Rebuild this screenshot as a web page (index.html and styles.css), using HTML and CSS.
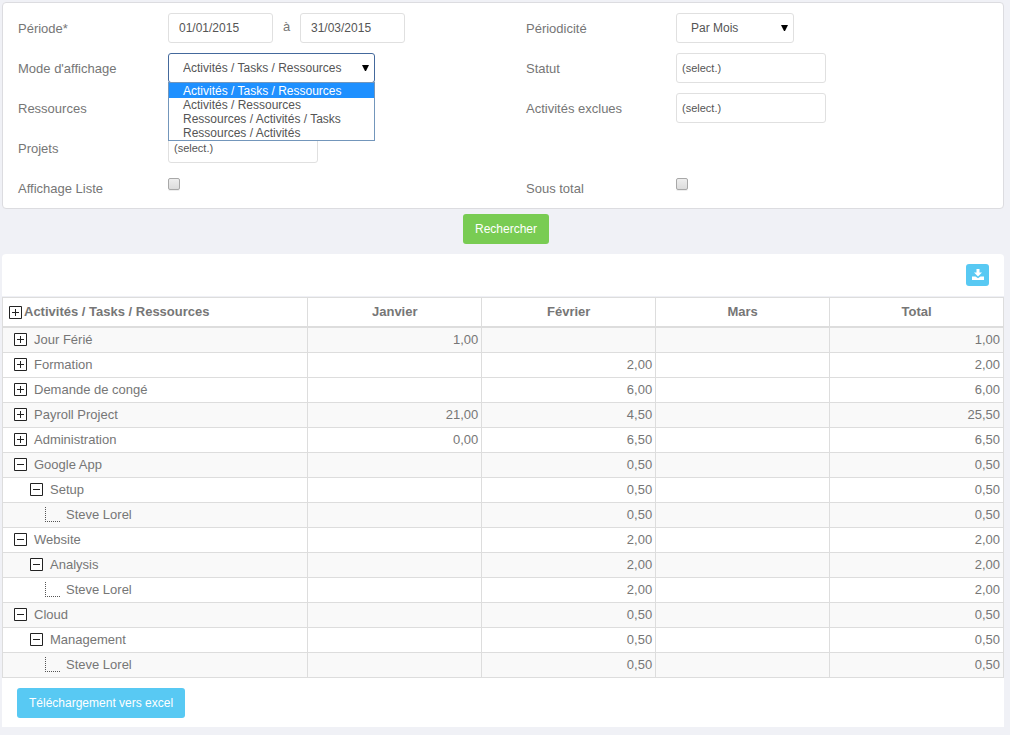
FILE: index.html
```html
<!DOCTYPE html>
<html lang="fr">
<head>
<meta charset="utf-8">
<title>Activités / Tasks / Ressources</title>
<link rel="stylesheet" href="styles.css">
</head>
<body>
<svg class="sprite" aria-hidden="true">
  <symbol id="plus" viewBox="0 0 13 13"><path d="M.5.5h12v12H.5z" fill="#fff" stroke="#222"/><path d="M3 6.500h7M6.500 3v7" stroke="#222"/></symbol>
  <symbol id="minus" viewBox="0 0 13 13"><path d="M.5.5h12v12H.5z" fill="#fff" stroke="#222"/><path d="M3 6.500h7" stroke="#222"/></symbol>
  <symbol id="branch" viewBox="0 0 16 16"><path d="M.5 0v15M0 14.500h16" fill="none" stroke="#555" stroke-dasharray="1 1"/></symbol>
  <symbol id="arrow" viewBox="0 0 7 6"><path d="M0 0h7L4 6H3z" fill="#000"/></symbol>
</svg>
<form class="page">
  <section class="filters">
    <div class="field">
      <label class="label" for="from">Période*</label>
      <div class="control">
        <input class="box date" id="from" type="text" value="01/01/2015">
        <label class="between" for="to">à</label>
        <input class="box date" id="to" type="text" value="31/03/2015">
      </div>
    </div>
    <div class="field">
      <label class="label" for="period">Périodicité</label>
      <div class="control">
        <div class="select-wrap">
          <select class="box select narrow" id="period"><option>Par Mois</option></select>
          <svg class="arrow"><use href="#arrow"/></svg>
        </div>
      </div>
    </div>
    <div class="field">
      <label class="label" for="mode">Mode d'affichage</label>
      <div class="control">
        <div class="select-wrap">
          <select class="box select wide open" id="mode"><option>Activités / Tasks / Ressources</option></select>
          <svg class="arrow"><use href="#arrow"/></svg>
          <ul class="options" role="listbox" aria-label="Mode d'affichage">
            <li class="option selected" role="option" aria-selected="true">Activités / Tasks / Ressources</li>
            <li class="option" role="option">Activités / Ressources</li>
            <li class="option" role="option">Ressources / Activités / Tasks</li>
            <li class="option" role="option">Ressources / Activités</li>
          </ul>
        </div>
      </div>
    </div>
    <div class="field">
      <label class="label" for="status">Statut</label>
      <div class="control"><input class="box picker" id="status" type="text" value="(select.)"></div>
    </div>
    <div class="field">
      <label class="label" for="resources">Ressources</label>
      <div class="control"><input class="box picker" id="resources" type="text"></div>
    </div>
    <div class="field">
      <label class="label" for="excluded">Activités exclues</label>
      <div class="control"><input class="box picker" id="excluded" type="text" value="(select.)"></div>
    </div>
    <div class="field first-column">
      <label class="label" for="projects">Projets</label>
      <div class="control"><input class="box picker" id="projects" type="text" value="(select.)"></div>
    </div>
    <div class="field short first-column">
      <label class="label" for="list">Affichage Liste</label>
      <div class="control"><input class="check" id="list" type="checkbox"></div>
    </div>
    <div class="field short">
      <label class="label" for="subtotal">Sous total</label>
      <div class="control"><input class="check" id="subtotal" type="checkbox"></div>
    </div>
  </section>

  <div class="search"><button class="button green" type="button">Rechercher</button></div>

  <section class="report">
    <div class="toolbar">
      <button class="download" type="button" aria-label="Télécharger">
        <svg class="download-icon" viewBox="0 0 12 11"><path d="M4.500 0h3v3.500H10L6 7.500 2 3.500h2.500z" fill="#fff"/><path d="M0 7.500h3.500L6 9.200l2.500-1.700H12V11H0z" fill="#fff"/></svg>
      </button>
    </div>
    <table class="grid">
      <colgroup><col class="name-col"><col><col><col><col></colgroup>
      <thead>
        <tr>
          <th class="name"><div class="node root"><button class="toggle" type="button" aria-label="Tout déplier"><svg class="icon"><use href="#plus"/></svg></button>Activités / Tasks / Ressources</div></th>
          <th>Janvier</th><th>Février</th><th>Mars</th><th>Total</th>
        </tr>
      </thead>
      <tbody>
        <tr class="shade"><td class="name"><div class="node"><button class="toggle" type="button" aria-label="Déplier"><svg class="icon"><use href="#plus"/></svg></button>Jour Férié</div></td><td>1,00</td><td></td><td></td><td>1,00</td></tr>
        <tr><td class="name"><div class="node"><button class="toggle" type="button" aria-label="Déplier"><svg class="icon"><use href="#plus"/></svg></button>Formation</div></td><td></td><td>2,00</td><td></td><td>2,00</td></tr>
        <tr><td class="name"><div class="node"><button class="toggle" type="button" aria-label="Déplier"><svg class="icon"><use href="#plus"/></svg></button>Demande de congé</div></td><td></td><td>6,00</td><td></td><td>6,00</td></tr>
        <tr class="shade"><td class="name"><div class="node"><button class="toggle" type="button" aria-label="Déplier"><svg class="icon"><use href="#plus"/></svg></button>Payroll Project</div></td><td>21,00</td><td>4,50</td><td></td><td>25,50</td></tr>
        <tr><td class="name"><div class="node"><button class="toggle" type="button" aria-label="Déplier"><svg class="icon"><use href="#plus"/></svg></button>Administration</div></td><td>0,00</td><td>6,50</td><td></td><td>6,50</td></tr>
        <tr class="shade"><td class="name"><div class="node"><button class="toggle" type="button" aria-label="Replier"><svg class="icon"><use href="#minus"/></svg></button>Google App</div></td><td></td><td>0,50</td><td></td><td>0,50</td></tr>
        <tr><td class="name"><div class="node task"><button class="toggle" type="button" aria-label="Replier"><svg class="icon"><use href="#minus"/></svg></button>Setup</div></td><td></td><td>0,50</td><td></td><td>0,50</td></tr>
        <tr class="shade"><td class="name"><div class="node person"><svg class="branch"><use href="#branch"/></svg>Steve Lorel</div></td><td></td><td>0,50</td><td></td><td>0,50</td></tr>
        <tr><td class="name"><div class="node"><button class="toggle" type="button" aria-label="Replier"><svg class="icon"><use href="#minus"/></svg></button>Website</div></td><td></td><td>2,00</td><td></td><td>2,00</td></tr>
        <tr class="shade"><td class="name"><div class="node task"><button class="toggle" type="button" aria-label="Replier"><svg class="icon"><use href="#minus"/></svg></button>Analysis</div></td><td></td><td>2,00</td><td></td><td>2,00</td></tr>
        <tr><td class="name"><div class="node person"><svg class="branch"><use href="#branch"/></svg>Steve Lorel</div></td><td></td><td>2,00</td><td></td><td>2,00</td></tr>
        <tr class="shade"><td class="name"><div class="node"><button class="toggle" type="button" aria-label="Replier"><svg class="icon"><use href="#minus"/></svg></button>Cloud</div></td><td></td><td>0,50</td><td></td><td>0,50</td></tr>
        <tr><td class="name"><div class="node task"><button class="toggle" type="button" aria-label="Replier"><svg class="icon"><use href="#minus"/></svg></button>Management</div></td><td></td><td>0,50</td><td></td><td>0,50</td></tr>
        <tr class="shade"><td class="name"><div class="node person"><svg class="branch"><use href="#branch"/></svg>Steve Lorel</div></td><td></td><td>0,50</td><td></td><td>0,50</td></tr>
      </tbody>
    </table>
    <div class="footer"><button class="button blue" type="button">Téléchargement vers excel</button></div>
  </section>
</form>
</body>
</html>
```
FILE: styles.css
```css
* { box-sizing: border-box; }

body {
  margin: 0;
  padding: 2px 6px 8px 2px;
  background: #f0f1f6;
  color: #767676;
  font: 13px/20px "Liberation Sans", Arial, sans-serif;
}

button, input, select { font-family: inherit; margin: 0; }

.sprite { display: none; }

/* Filters */
.filters {
  display: grid;
  grid-template-columns: 1fr 1fr;
  gap: 10px 46px;
  padding: 10px 15px 9px;
  background: #fff;
  border: 1px solid #dcdce0;
  border-radius: 4px;
}
.field { display: flex; min-height: 30px; }
.short { min-height: 26px; }
.first-column { grid-column-start: 1; }
.label { width: 150px; padding-top: 6px; }
.control { display: flex; align-items: flex-start; }
.between { width: 27px; padding-top: 4px; text-align: center; }

.box {
  display: block;
  height: 30px;
  padding: 0 10px;
  background: #fff;
  border: 1px solid #e0e0e0;
  border-radius: 3px;
  color: #555;
  font-size: 12px;
}
.date { width: 105px; }
.picker { width: 150px; padding: 0 5px; font-size: 11px; }
.select-wrap { position: relative; }
.select { appearance: none; padding: 0 14px; }
.narrow { width: 118px; }
.wide { width: 207px; }
.open { border-color: #44699c; }
.arrow {
  position: absolute;
  top: 12px;
  right: 6px;
  width: 7px;
  height: 6px;
  pointer-events: none;
}
.options {
  position: absolute;
  z-index: 1;
  top: 29px;
  left: 0;
  width: 100%;
  margin: 0;
  padding: 0;
  list-style: none;
  background: #fff;
  border: 1px solid #7396bb;
  color: #555;
  font-size: 12px;
  line-height: 14px;
}
.option { padding: 0 14px; }
.selected { padding-top: 1px; background: #1e90ff; color: #fff; }

.check {
  appearance: none;
  width: 12px;
  height: 12px;
  margin-top: 5px;
  background: linear-gradient(#eee, #dcdcdc);
  border: 1px solid #a8a8a8;
  border-radius: 2px;
  box-shadow: 0 1px 0 #eee;
}

/* Buttons */
.search { display: flex; justify-content: center; padding: 5px 0 10px 6px; }
.button {
  height: 30px;
  padding: 0 12px;
  border: 0;
  border-radius: 3px;
  color: #fff;
  font-size: 12px;
}
.green { background: #79cc53; }
.blue { background: #58c9f3; }

/* Report */
.report { background: #fff; border-radius: 4px 4px 0 0; }
.toolbar {
  display: flex;
  justify-content: flex-end;
  padding: 10px 15px;
  border-bottom: 1px solid #eff0f5;
}
.download {
  display: flex;
  align-items: center;
  justify-content: center;
  width: 23px;
  height: 22px;
  padding: 0 0 2px;
  background: #58c9f3;
  border: 0;
  border-radius: 3px;
}
.download-icon { width: 12px; height: 11px; }

.grid { width: 100%; table-layout: fixed; border-collapse: collapse; }
.name-col { width: 30.5%; }
.grid th, .grid td { border: 1px solid #ddd; padding: 2px 3px; text-align: right; }
.grid td { height: 25px; }
.grid th { height: 29px; padding: 4px 4px 3px; text-align: center; border-bottom-width: 2px; }
.grid .name { padding-left: 0; text-align: left; }
.shade { background: #f9f9f9; }

.node { display: flex; align-items: center; gap: 7px; padding-left: 11px; }
.root { gap: 2px; padding-left: 6px; }
.task { padding-left: 27px; }
.person { gap: 5px; padding-left: 42px; }
.toggle { width: 13px; height: 13px; padding: 0; border: 0; background: none; }
.icon { display: block; width: 13px; height: 13px; }
.branch { display: block; width: 16px; height: 16px; }

.footer { padding: 10px 15px 9px; }
```
